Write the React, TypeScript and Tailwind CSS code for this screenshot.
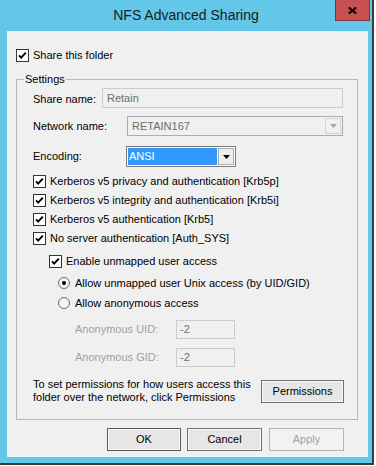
import React from 'react';

function CheckBox() {
    return (
        <svg width="13" height="13" viewBox="0 0 13 13" className="shrink-0">
            <rect x="0.5" y="0.5" width="12" height="12" fill="#fff" stroke="#333" />
            <polyline points="3,6.3 5.2,8.6 9.8,3.6" fill="none" stroke="#000" strokeWidth="1.9" />
        </svg>
    );
}

function Radio({ on }: { on?: boolean }) {
    return (
        <svg width="12" height="12" viewBox="0 0 12 12" className="shrink-0">
            <circle cx="6" cy="6" r="5.5" fill="#f4f4f4" stroke="#6e6e6e" />
            {on && <circle cx="6" cy="6" r="2" fill="#000" />}
        </svg>
    );
}

function Arrow({ color }: { color: string }) {
    return (
        <svg width="7" height="4" viewBox="0 0 7 4">
            <polygon points="0,0 7,0 3.5,4" fill={color} />
        </svg>
    );
}

export default function App() {
    return (
        <div className="w-[376px] h-[466px] bg-white overflow-hidden font-['Liberation_Sans',Arial,sans-serif] text-[11px] text-black">
            <div className="w-[374px] h-[465px] bg-[#62c7e9] border-r-2 border-b-2 border-[#3a3a3a] flex flex-col">
                {/* Title bar */}
                <div className="relative h-[31px] flex items-center justify-center">
                    <span className="text-[14px] text-[#1b1b1b]">NFS Advanced Sharing</span>
                    <div className="absolute right-[2px] top-0 w-[35px] h-[21px] bg-[#c75050] border border-t-0 border-[#7e3434] flex items-center justify-center">
                        <svg width="9" height="7" viewBox="0 0 9 7">
                            <path d="M0.8 0.5 L8.2 6.5 M8.2 0.5 L0.8 6.5" stroke="#000" strokeWidth="2" />
                        </svg>
                    </div>
                </div>

                {/* Client area */}
                <div className="ml-[7px] w-[361px] h-[426px] bg-[#f0f0f0] flex flex-col">
                    <div className="mt-[18px] ml-[9px] h-[13px] flex items-center gap-[4px]">
                        <CheckBox />
                        <span>Share this folder</span>
                    </div>

                    {/* Settings group */}
                    <div className="relative mt-[17px] ml-[9px] w-[342px] h-[341px] border border-[#b8b8b8]">
                        <span className="absolute -top-[8px] left-[7px] px-[1px] bg-[#f0f0f0] leading-[14px]">Settings</span>
                        <div className="flex flex-col pl-[16px]">
                            <div className="mt-[8px] h-[20px] flex items-center">
                                <span className="w-[69px] mt-[3px]">Share name:</span>
                                <div className="w-[241px] h-[20px] border border-[#cccccc] pl-[4px] flex items-center text-[#6d6d6d]">Retain</div>
                            </div>

                            <div className="mt-[8px] h-[20px] flex items-center">
                                <span className="w-[94px]">Network name:</span>
                                <div className="w-[216px] h-[20px] border border-[#adadad] pl-[4px] pr-[1px] flex items-center justify-between text-[#6d6d6d]">
                                    <span>RETAIN167</span>
                                    <div className="w-[16px] h-[16px] border border-[#d6d6d6] flex items-center justify-center">
                                        <Arrow color="#a8a8a8" />
                                    </div>
                                </div>
                            </div>

                            <div className="mt-[10px] h-[21px] flex items-center">
                                <span className="w-[93px]">Encoding:</span>
                                <div className="w-[110px] h-[21px] border border-[#7a7a7a] bg-white p-[1px] flex gap-[1px]">
                                    <div className="flex-1 bg-[#3399ff] text-white pl-[1px] flex items-center">ANSI</div>
                                    <div className="w-[16px] border border-[#acacac] bg-[#eeeeee] flex items-center justify-center">
                                        <Arrow color="#000" />
                                    </div>
                                </div>
                            </div>

                            <div className="mt-[5px] flex flex-col">
                                {[
                                    'Kerberos v5 privacy and authentication [Krb5p]',
                                    'Kerberos v5 integrity and authentication [Krb5i]',
                                    'Kerberos v5 authentication [Krb5]',
                                    'No server authentication [Auth_SYS]',
                                ].map((label) => (
                                    <div key={label} className="h-[19px] flex items-center gap-[4px]">
                                        <CheckBox />
                                        <span>{label}</span>
                                    </div>
                                ))}
                            </div>

                            <div className="mt-[4px] ml-[16px] h-[19px] flex items-center gap-[4px]">
                                <CheckBox />
                                <span>Enable unmapped user access</span>
                            </div>

                            <div className="mt-[2px] ml-[25px] flex flex-col">
                                <div className="h-[20px] flex items-center gap-[5px]">
                                    <Radio on />
                                    <span>Allow unmapped user Unix access (by UID/GID)</span>
                                </div>
                                <div className="h-[20px] flex items-center gap-[5px]">
                                    <Radio />
                                    <span>Allow anonymous access</span>
                                </div>
                            </div>

                            <div className="mt-[7px] ml-[42px] h-[19px] flex items-center">
                                <span className="w-[101px] text-[#a0a0a0]">Anonymous UID:</span>
                                <div className="w-[59px] h-[19px] border border-[#cccccc] pl-[3px] flex items-center text-[#6d6d6d]">-2</div>
                            </div>
                            <div className="mt-[9px] ml-[42px] h-[19px] flex items-center">
                                <span className="w-[101px] text-[#a0a0a0]">Anonymous GID:</span>
                                <div className="w-[59px] h-[19px] border border-[#cccccc] pl-[3px] flex items-center text-[#6d6d6d]">-2</div>
                            </div>

                            <div className="mt-[12px] h-[24px] pr-[13px] flex items-center justify-between">
                                <p className="leading-[13px]">
                                    To set permissions for how users access this
                                    <br />
                                    folder over the network, click Permissions
                                </p>
                                <div className="w-[83px] h-[23px] border border-[#707070] bg-[#e6e6e6] shadow-[inset_0_0_0_1px_#fafafa] flex items-center justify-center">
                                    Permissions
                                </div>
                            </div>
                        </div>
                    </div>

                    {/* Dialog buttons */}
                    <div className="mt-[8px] ml-[100px] flex">
                        <div className="w-[74px] h-[23px] border border-[#5a5a5a] bg-[#e6e6e6] shadow-[inset_0_0_0_1px_#fafafa] flex items-center justify-center">OK</div>
                        <div className="ml-[6px] w-[75px] h-[23px] border border-[#707070] bg-[#e6e6e6] shadow-[inset_0_0_0_1px_#fafafa] flex items-center justify-center">Cancel</div>
                        <div className="ml-[7px] w-[75px] h-[23px] border border-[#b5b5b5] bg-[#f2f2f2] text-[#a0a0a0] flex items-center justify-center">Apply</div>
                    </div>
                </div>
            </div>
        </div>
    );
}
